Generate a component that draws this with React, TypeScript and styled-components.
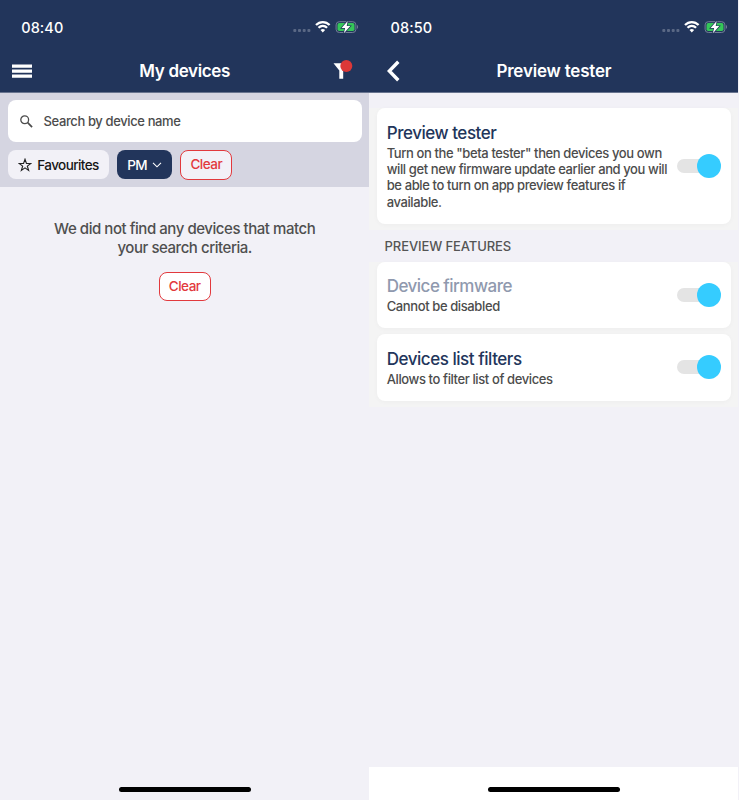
import React from "react";
import styled, { createGlobalStyle } from "styled-components";

const GlobalStyle = createGlobalStyle`
  * { box-sizing: border-box; }
  body { margin: 0; background: #f2f1f7; font-family: Inter, "Liberation Sans", sans-serif; }
  button { font: inherit; margin: 0; padding: 0; border: 0; background: none; color: inherit; }
  svg { display: block; flex: none; }
`;

const Screens = styled.main`
  display: grid;
  grid-template-columns: 369.4px 369px;
  width: 739px;
  height: 800px;
  overflow: hidden;
`;

const Phone = styled.section`
  display: flex;
  flex-direction: column;
  height: 800px;
  background: #f2f1f7;
`;

const Header = styled.header`
  height: 93px;
  flex: none;
  background: #22355b;
  border-bottom: 1px solid #68748f;
  color: #fff;
`;

const StatusBar = styled.div`
  display: flex;
  align-items: center;
  height: 54px;
  padding: 0 11.5px 0 21.2px;
`;

const Time = styled.span`
  flex: 1;
  font-size: 14.5px;
  font-weight: 500;
  letter-spacing: 0.1px;
`;

const NavBar = styled.div`
  display: grid;
  grid-template-columns: 60px 1fr 60px;
  align-items: center;
  height: 34px;
`;

const NavTitle = styled.h1<{ $spacing: number }>`
  margin: 0;
  font-size: 17px;
  font-weight: 600;
  line-height: 22px;
  text-align: center;
  white-space: nowrap;
  letter-spacing: ${(p) => p.$spacing}px;
`;

const NavButton = styled.button<{ $left: number }>`
  padding-left: ${(p) => p.$left}px;
`;

const Filters = styled.div`
  flex: none;
  height: 94px;
  padding: 7.4px 7.5px 0 8px;
  background: #d5d5e1;
`;

const SearchBox = styled.label`
  display: flex;
  align-items: center;
  gap: 11px;
  height: 42px;
  padding-left: 11.5px;
  border-radius: 8px;
  background: #fff;
  color: #4c4c4c;
`;

const SearchText = styled.span`
  font-size: 13px;
  letter-spacing: -0.38px;
  font-weight: 450;
`;

const Chips = styled.div`
  display: flex;
  gap: 8px;
  margin-top: 7.8px;
`;

const Chip = styled.button<{ $width: number; $dark?: boolean }>`
  display: flex;
  align-items: center;
  justify-content: center;
  gap: 5px;
  width: ${(p) => p.$width}px;
  height: 29px;
  border-radius: 8px;
  font-size: 13.5px;
  font-weight: 450;
  letter-spacing: -0.57px;
  white-space: nowrap;
  background: ${(p) => (p.$dark ? "#22355b" : "#f2f1f7")};
  color: ${(p) => (p.$dark ? "#fff" : "#161616")};
`;

const ClearButton = styled.button<{ $white?: boolean }>`
  width: 52px;
  height: 29.4px;
  border: 1px solid #e2393d;
  border-radius: 8px;
  font-size: 13.5px;
  font-weight: 450;
  line-height: 27px;
  letter-spacing: -0.5px;
  color: #e2393d;
  background: ${(p) => (p.$white ? "#fff" : "#f2f1f7")};
`;

const Empty = styled.div`
  flex: 1;
  display: flex;
  flex-direction: column;
  align-items: center;
  gap: 14.5px;
  padding-top: 32px;
`;

const EmptyText = styled.p`
  margin: 0;
  font-size: 15px;
  font-weight: 450;
  line-height: 19.2px;
  text-align: center;
  letter-spacing: -0.45px;
  color: #4f4f4f;
`;

const HomeArea = styled.footer<{ $white?: boolean }>`
  display: flex;
  justify-content: center;
  align-items: flex-end;
  flex: none;
  height: 33.4px;
  padding-bottom: 8px;
  background: ${(p) => (p.$white ? "#fff" : "transparent")};
`;

const HomeIndicator = styled.div`
  width: 132px;
  height: 5px;
  border-radius: 3px;
  background: #000;
`;

const Settings = styled.div`
  flex: 1;
  padding-top: 15.2px;
`;

const CardGroup = styled.div`
  display: flex;
  flex-direction: column;
  gap: 6.4px;
  padding: 0 7.7px 6px 7.3px;
  background: #f4f4f4;
`;

const Card = styled.article<{ $height: number }>`
  display: flex;
  align-items: center;
  justify-content: space-between;
  height: ${(p) => p.$height}px;
  padding: 0 9.9px 0 10px;
  border-radius: 8px;
  background: #fff;
  box-shadow: 0 1px 5px rgba(0, 0, 0, 0.03);
`;

const CardCopy = styled.div`
  width: 284px;
  padding-top: 1px;
`;

const CardTitle = styled.h2<{ $muted?: boolean; $spacing: number }>`
  margin: 0;
  font-size: 17px;
  line-height: 20px;
  font-weight: 550;
  letter-spacing: ${(p) => p.$spacing}px;
  color: ${(p) => (p.$muted ? "#8f99ae" : "#22355b")};
`;

const CardText = styled.p`
  margin: 1.8px 0 0;
  font-size: 13px;
  font-weight: 450;
  line-height: 16.3px;
  letter-spacing: -0.39px;
  white-space: pre;
  color: #4c4c4c;
`;

const SectionTitle = styled.h3`
  margin: 0;
  height: 31.6px;
  padding-left: 15.2px;
  font-size: 13px;
  font-weight: 500;
  line-height: 32px;
  letter-spacing: -0.1px;
  color: #555;
`;

const Switch = styled.span`
  display: flex;
  align-items: center;
  width: 43.5px;
  height: 24px;
`;

const Track = styled.span`
  flex: none;
  width: 32px;
  height: 14px;
  margin-right: -12.5px;
  border-radius: 7px;
  background: #e4e4e4;
`;

const Knob = styled.span`
  flex: none;
  width: 24px;
  height: 24px;
  border-radius: 50%;
  background: #35ccff;
`;

function StatusIcons() {
  return (
    <svg width="68" height="16" viewBox="0 0 68 16">
      <g fill="#5a6885">
        <rect x="3.3" y="10" width="3" height="3" rx=".9" />
        <rect x="8" y="10" width="3" height="3" rx=".9" />
        <rect x="12.7" y="10" width="3" height="3" rx=".9" />
        <rect x="17.4" y="10" width="3" height="3" rx=".9" />
      </g>
      <g fill="none" stroke="#fff" strokeWidth="2.2">
        <path d="M26 6.1C29.8 2.1 35.8 2.1 39.6 6.1" />
        <path d="M28.5 8.8C31 6.2 34.6 6.2 37.1 8.8" />
      </g>
      <path d="M30.5 11c1.4-1.3 3.2-1.3 4.6 0l-2.3 2.4z" fill="#fff" />
      <rect x="46.1" y="2.7" width="19.8" height="10.8" rx="3.2" fill="none" stroke="#727e97" />
      <path d="M67 6.1c1.4.7 1.4 3.2 0 4z" fill="#727e97" />
      <rect x="47.5" y="4.1" width="17" height="8" rx="1.8" fill="#35c759" />
      <path d="M57.7 2 51.6 9h3.5l-1.2 5.2 6.4-7.1h-3.6z" fill="#fff" stroke="#22355b" strokeWidth="1.4" paintOrder="stroke" />
    </svg>
  );
}

function PhoneHeader({ time, title, spacing, left, right }: {
  time: string; title: string; spacing: number; left: React.ReactNode; right?: React.ReactNode;
}) {
  return (
    <Header>
      <StatusBar><Time>{time}</Time><StatusIcons /></StatusBar>
      <NavBar>{left}<NavTitle $spacing={spacing}>{title}</NavTitle>{right}</NavBar>
    </Header>
  );
}

function SettingCard({ height, title, spacing, text, muted }: {
  height: number; title: string; spacing: number; text: string; muted?: boolean;
}) {
  return (
    <Card $height={height}>
      <CardCopy>
        <CardTitle $muted={muted} $spacing={spacing}>{title}</CardTitle>
        <CardText>{text}</CardText>
      </CardCopy>
      <Switch role="switch" aria-checked="true"><Track /><Knob /></Switch>
    </Card>
  );
}

export default function App() {
  return (
    <>
      <GlobalStyle />
      <Screens>
        <Phone>
          <PhoneHeader
            time="08:40"
            title="My devices"
            spacing={-0.35}
            left={
              <NavButton $left={11.8} aria-label="Menu">
                <svg width="20" height="14" viewBox="0 0 20 14"><path d="M0 2.1h20M0 7.1h20M0 12.1h20" stroke="#fff" strokeWidth="3.3" /></svg>
              </NavButton>
            }
            right={
              <NavButton $left={23.6} aria-label="Filter">
                <svg width="22" height="22" viewBox="0 0 22 22"><path d="M.5 3.3h15.2L10.2 10.5v8.3H6.3v-8.3z" fill="#fff" /><circle cx="13.3" cy="6.1" r="6" fill="#dc3838" /></svg>
              </NavButton>
            }
          />
          <Filters>
            <SearchBox>
              <svg width="13" height="13" viewBox="0 0 13 13" fill="none" stroke="#4c4c4c"><circle cx="4.7" cy="4.7" r="3.9" strokeWidth="1.3" /><path d="m7.7 7.7 4.4 4.4" strokeWidth="1.7" /></svg>
              <SearchText>Search by device name</SearchText>
            </SearchBox>
            <Chips>
              <Chip $width={101}>
                <svg width="14" height="14" viewBox="0 0 14 14"><path d="m7 1.3 1.45 4.1 4.4.1-3.5 2.65 1.25 4.2L7 9.85l-3.6 2.5 1.25-4.2L1.15 5.5l4.4-.1z" fill="none" stroke="#222" strokeWidth="1.15" strokeLinejoin="miter" /></svg>
                Favourites
              </Chip>
              <Chip $width={55.3} $dark>
                PM
                <svg width="10" height="6" viewBox="0 0 10 6"><path d="m1 .8 4 4 4-4" fill="none" stroke="#fff" strokeWidth="1.1" /></svg>
              </Chip>
              <ClearButton>Clear</ClearButton>
            </Chips>
          </Filters>
          <Empty>
            <EmptyText>We did not find any devices that match<br />your search criteria.</EmptyText>
            <ClearButton $white>Clear</ClearButton>
          </Empty>
          <HomeArea><HomeIndicator /></HomeArea>
        </Phone>
        <Phone>
          <PhoneHeader
            time="08:50"
            title="Preview tester"
            spacing={-0.2}
            left={
              <NavButton $left={17.4} aria-label="Back">
                <svg width="14" height="22" viewBox="0 0 14 22"><path d="M11.3 1.7 2.3 11l9 9.3" fill="none" stroke="#fff" strokeWidth="3.4" /></svg>
              </NavButton>
            }
          />
          <Settings>
            <CardGroup>
              <SettingCard
                height={115.8}
                title="Preview tester"
                spacing={-0.46}
                text={'Turn on the "beta tester" then devices you own\nwill get new firmware update earlier and you will\nbe able to turn on app preview features if\navailable.'}
              />
            </CardGroup>
            <SectionTitle>PREVIEW FEATURES</SectionTitle>
            <CardGroup>
              <SettingCard height={66.3} title="Device firmware" spacing={-0.52} text="Cannot be disabled" muted />
              <SettingCard height={66.3} title="Devices list filters" spacing={-0.46} text="Allows to filter list of devices" />
            </CardGroup>
          </Settings>
          <HomeArea $white><HomeIndicator /></HomeArea>
        </Phone>
      </Screens>
    </>
  );
}
